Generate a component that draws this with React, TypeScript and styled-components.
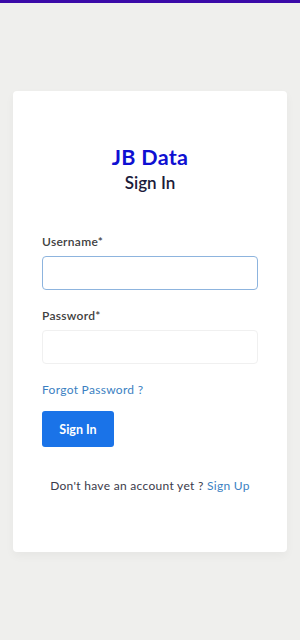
import React from 'react';
import styled, { createGlobalStyle } from 'styled-components';

const GlobalStyle = createGlobalStyle`
  html, body {
    margin: 0;
    padding: 0;
    background: #efefed;
    font-family: Lato, "Noto Sans", sans-serif;
  }
  * { box-sizing: border-box; }
`;

const Page = styled.div`
  min-height: 640px;
  border-top: 3px solid #3a0aa8;
  padding: 88px 13px 0;
`;

const Card = styled.div`
  background: #fff;
  border-radius: 4px;
  box-shadow: 0 4px 10px rgba(0, 0, 0, 0.04);
  padding: 53px 29px 58px;
  height: 461px;
`;

const Brand = styled.h1`
  margin: 0;
  text-align: center;
  color: #0f10d2;
  font-size: 21.5px;
  font-weight: 700;
  letter-spacing: 0.3px;
  line-height: 26px;
`;

const Heading = styled.h2`
  margin: 0;
  text-align: center;
  color: #1b1b3a;
  font-size: 17px;
  font-weight: 600;
  line-height: 26px;
`;

const Form = styled.form`
  display: flex;
  flex-direction: column;
  margin-top: 38px;
`;

const Label = styled.label`
  font-size: 12px;
  font-weight: 600;
  color: #404040;
  letter-spacing: 0.3px;
  line-height: 16px;
  margin-bottom: 6px;
`;

const Input = styled.input<{ $focused?: boolean }>`
  height: 34px;
  width: 100%;
  margin: 0 0 18px;
  border-radius: 4px;
  border: 1px solid ${(p) => (p.$focused ? '#8db4de' : '#f0f0f0')};
  background: #fff;
  outline: none;
  font-family: inherit;
`;

const Link = styled.a`
  color: #3b7fc2;
  font-size: 12px;
  text-decoration: none;
  letter-spacing: 0.3px;
  line-height: 16px;
`;

const Button = styled.button`
  align-self: flex-start;
  margin-top: 13px;
  width: 72px;
  height: 36px;
  border: none;
  border-radius: 3px;
  background: #1a73e8;
  color: #fff;
  font-family: inherit;
  font-size: 12.5px;
  font-weight: 700;
`;

const Footer = styled.p`
  margin: 31px 0 0;
  text-align: center;
  font-size: 12px;
  color: #3a3a4a;
  letter-spacing: 0.3px;
  line-height: 16px;
`;

export default function App() {
  return (
    <>
      <GlobalStyle />
      <Page>
        <Card>
          <Brand>JB Data</Brand>
          <Heading>Sign In</Heading>
          <Form onSubmit={(e) => e.preventDefault()}>
            <Label>Username*</Label>
            <Input $focused />
            <Label>Password*</Label>
            <Input type="password" />
            <Link href="#">Forgot Password ?</Link>
            <Button type="submit">Sign In</Button>
          </Form>
          <Footer>
            Don't have an account yet ? <Link href="#">Sign Up</Link>
          </Footer>
        </Card>
      </Page>
    </>
  );
}
